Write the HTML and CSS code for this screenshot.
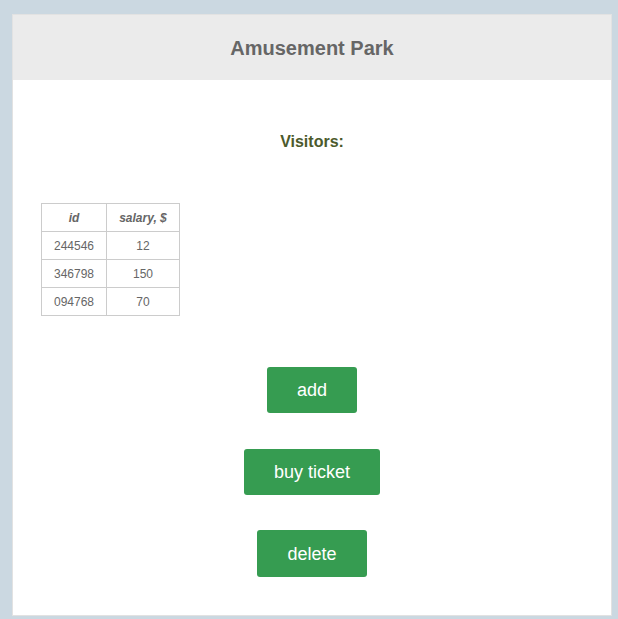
FILE: index.html
```html
<!DOCTYPE html>
<html>
<head>
<meta charset="utf-8">
<link rel="stylesheet" href="styles.css">
</head>
<body>
<div class="card">
  <header class="card-header"><h1 class="title">Amusement Park</h1></header>
  <main class="card-body">
    <h2 class="subtitle">Visitors:</h2>
    <table class="visitors">
      <thead>
        <tr><th class="col-id">id</th><th class="col-salary">salary, $</th></tr>
      </thead>
      <tbody>
        <tr><td>244546</td><td>12</td></tr>
        <tr><td>346798</td><td>150</td></tr>
        <tr><td>094768</td><td>70</td></tr>
      </tbody>
    </table>
    <div class="actions">
      <button class="btn">add</button>
      <button class="btn">buy ticket</button>
      <button class="btn btn-last">delete</button>
    </div>
  </main>
</div>
</body>
</html>
```
FILE: styles.css
```css
html, body {
  margin: 0;
  padding: 0;
}
body {
  background: #cbd8e1;
  font-family: "Liberation Sans", Arial, sans-serif;
  padding: 14px 6px 3px 12px;
}
.card {
  width: 600px;
  box-sizing: border-box;
  background: #fff;
  border: 1px solid #e2e2e2;
}
.card-header {
  background: #ebebeb;
  height: 65px;
  display: flex;
  align-items: center;
  justify-content: center;
}
.title {
  margin: 0;
  font-size: 20px;
  line-height: 24px;
  font-weight: bold;
  color: #666;
  padding-top: 1px;
}
.card-body {
  padding: 53px 0 38px 28px;
  display: flex;
  flex-direction: column;
}
.subtitle {
  margin: 0 28px 0 0;
  text-align: center;
  font-size: 16px;
  line-height: 18px;
  font-weight: bold;
  color: #4c5a2c;
}
.visitors {
  margin-top: 52px;
  border-collapse: collapse;
  font-size: 12px;
  color: #666;
  align-self: flex-start;
}
.visitors th,
.visitors td {
  border: 1px solid #ccc;
  height: 27px;
  padding: 0;
  text-align: center;
}
.visitors th {
  font-style: italic;
  font-weight: bold;
}
.col-id {
  width: 64px;
}
.col-salary {
  width: 72px;
}
.actions {
  margin: 51px 28px 0 0;
  display: flex;
  flex-direction: column;
  align-items: center;
  gap: 36px;
}
.btn {
  font-family: "Liberation Sans", Arial, sans-serif;
  font-size: 18px;
  line-height: 22px;
  padding: 12px 30px;
  border: none;
  border-radius: 3px;
  background: #369c51;
  color: #fff;
}
.btn-last {
  margin-top: -1px;
  padding-top: 13px;
  padding-bottom: 12px;
}
```
